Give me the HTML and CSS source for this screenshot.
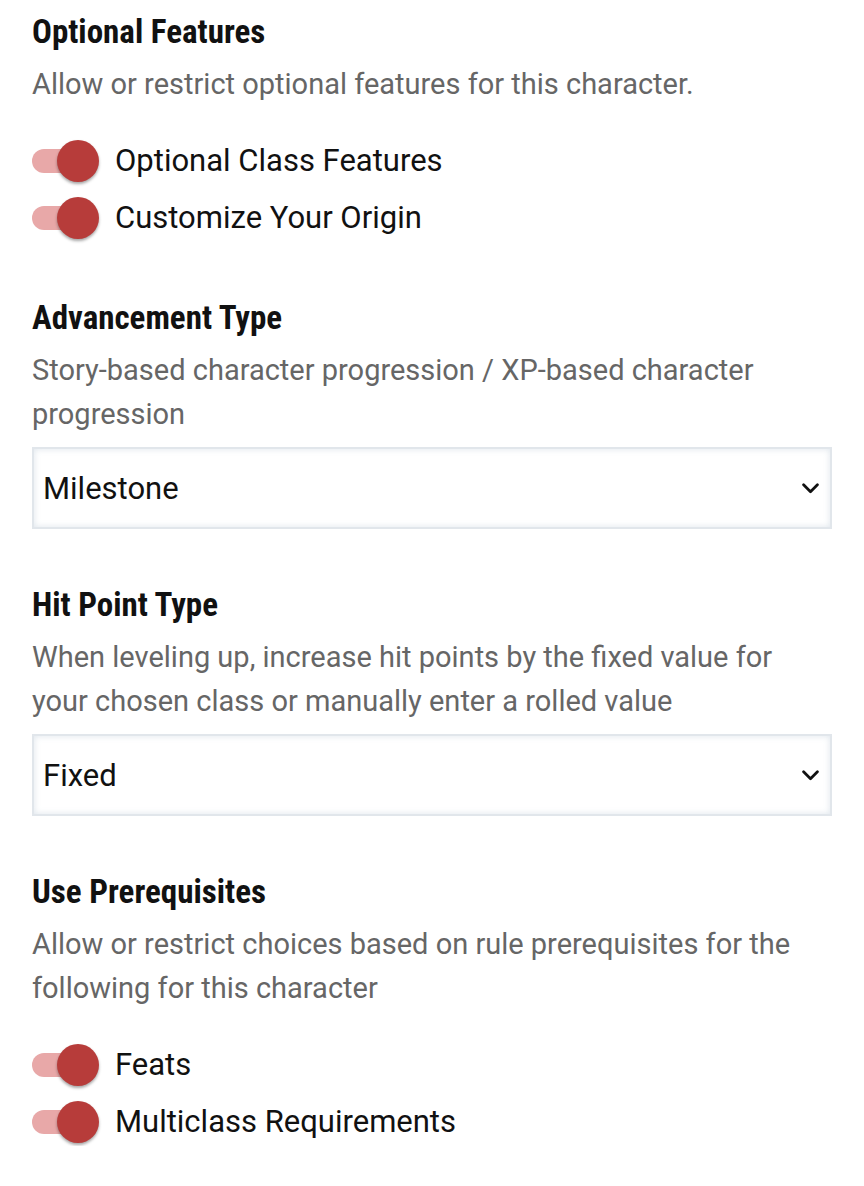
FILE: index.html
```html
<!DOCTYPE html>
<html>
<head>
<meta charset="utf-8">
<link rel="stylesheet" href="styles.css">
</head>
<body>
<main class="settings">
  <section class="group">
    <h2 class="title">Optional Features</h2>
    <p class="desc">Allow or restrict optional features for this character.</p>
    <div class="toggles">
      <label class="toggle"><span class="switch"><span class="track"></span><span class="thumb"></span></span><span class="label">Optional Class Features</span></label>
      <label class="toggle"><span class="switch"><span class="track"></span><span class="thumb"></span></span><span class="label">Customize Your Origin</span></label>
    </div>
  </section>
  <section class="group">
    <h2 class="title">Advancement Type</h2>
    <p class="desc">Story-based character progression / XP-based character progression</p>
    <div class="select"><span class="value">Milestone</span><svg class="chev" viewBox="0 0 16 10" width="17" height="11"><path d="M1.5 1.5 L8 8 L14.5 1.5" fill="none" stroke="#111" stroke-width="2.6" stroke-linecap="round" stroke-linejoin="round"/></svg></div>
  </section>
  <section class="group">
    <h2 class="title">Hit Point Type</h2>
    <p class="desc">When leveling up, increase hit points by the fixed value for your chosen class or manually enter a rolled value</p>
    <div class="select"><span class="value">Fixed</span><svg class="chev" viewBox="0 0 16 10" width="17" height="11"><path d="M1.5 1.5 L8 8 L14.5 1.5" fill="none" stroke="#111" stroke-width="2.6" stroke-linecap="round" stroke-linejoin="round"/></svg></div>
  </section>
  <section class="group">
    <h2 class="title">Use Prerequisites</h2>
    <p class="desc">Allow or restrict choices based on rule prerequisites for the following for this character</p>
    <div class="toggles">
      <label class="toggle"><span class="switch"><span class="track"></span><span class="thumb"></span></span><span class="label">Feats</span></label>
      <label class="toggle"><span class="switch"><span class="track"></span><span class="thumb"></span></span><span class="label">Multiclass Requirements</span></label>
    </div>
  </section>
</main>
</body>
</html>
```
FILE: styles.css
```css
* { box-sizing: border-box; }
html, body { margin: 0; padding: 0; background: #fff; }
body { font-family: Roboto, "Noto Sans", sans-serif; color: #111; }
.settings { padding: 12px 32px 0 32px; width: 864px; display: flex; flex-direction: column; gap: 56px; }
.group { display: flex; flex-direction: column; }
.title {
  margin: 0;
  font-family: "Roboto Condensed", Roboto, sans-serif;
  font-weight: 700;
  font-size: 33px;
  line-height: 40px;
  color: #111;
}
.desc {
  margin: 10px 0 0 0;
  font-size: 29px;
  line-height: 44px;
  color: #666;
}
.toggles { display: flex; flex-direction: column; gap: 15px; margin-top: 34px; margin-bottom: 3px; }
.toggle { display: flex; align-items: center; gap: 16px; height: 42px; }
.switch { position: relative; width: 67px; height: 42px; flex: none; }
.track { position: absolute; left: 0; top: 9px; width: 58px; height: 24px; border-radius: 12px; background: #e8a8a8; }
.thumb { position: absolute; left: 25px; top: 0; width: 42px; height: 42px; border-radius: 50%; background: #b73c3a; box-shadow: 0 2px 3px rgba(0,0,0,0.35); }
.label { font-size: 31px; color: #111; line-height: 42px; }
.select {
  margin-top: 11px;
  height: 82px;
  border: 2px solid #e1e6eb;
  box-shadow: inset 0 0 6px rgba(180,195,210,0.45);
  display: flex; align-items: center; justify-content: space-between;
  padding: 0 11px 0 9px;
  background: #fff;
}
.value { font-size: 31px; color: #111; }
.chev { display: block; }
```
